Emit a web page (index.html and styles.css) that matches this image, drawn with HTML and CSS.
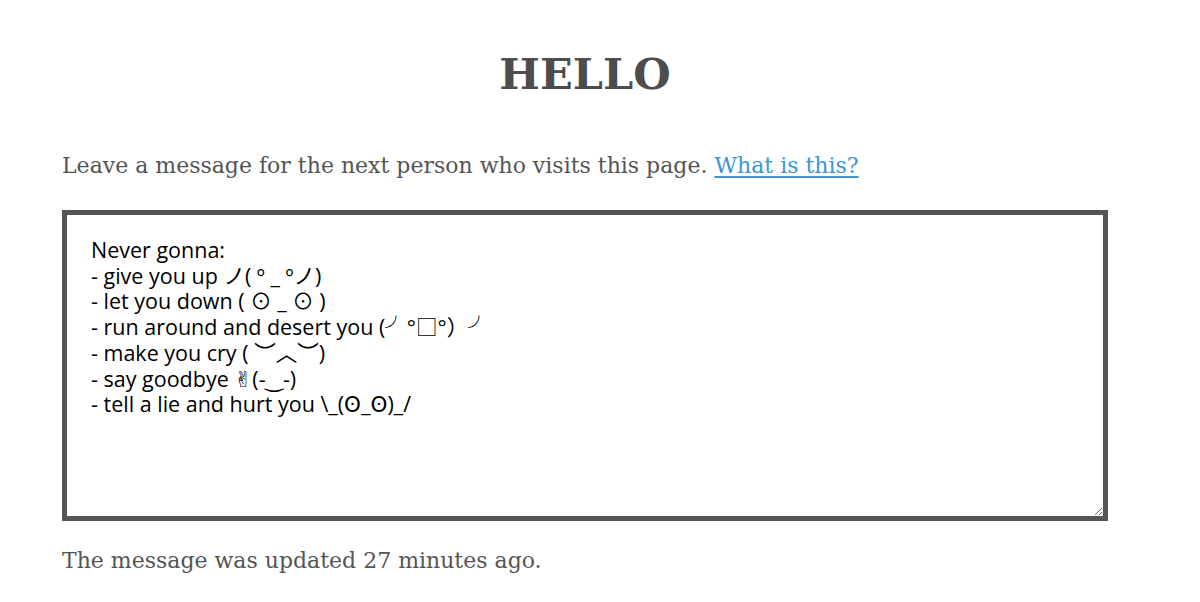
FILE: index.html
```html
<!DOCTYPE html>
<html>
<head>
<meta charset="utf-8">
<link rel="stylesheet" href="styles.css">
</head>
<body>
<main class="page">
  <h1 class="title">HELLO</h1>
  <p class="intro">Leave a message for the next person who visits this page. <a class="link" href="#">What is this?</a></p>
  <textarea class="message">Never gonna:
- give you up ノ( º _ ºノ)
- let you down ( ⊙ _ ⊙ )
- run around and desert you (╯°□°）╯
- make you cry ( ︶︿︶)
- say goodbye ✌︎(-‿-)
- tell a lie and hurt you \_(ʘ_ʘ)_/</textarea>
  <p class="status">The message was updated 27 minutes ago.</p>
</main>
</body>
</html>
```
FILE: styles.css
```css
html, body {
  margin: 0;
  padding: 0;
  background: #fff;
}
.page {
  width: 1046px;
  margin: 0 0 0 62px;
  padding-top: 44px;
  font-family: "DejaVu Serif", "Liberation Serif", serif;
  color: #555;
}
.title {
  margin: 0;
  text-align: center;
  font-size: 43px;
  font-weight: bold;
  line-height: 60px;
  color: #4d4d4d;
}
.intro {
  margin: 44px 0 0;
  font-size: 22px;
  line-height: 36px;
}
.link {
  color: #3b97d3;
  text-decoration: underline;
  text-underline-offset: 3px;
}
.message {
  display: block;
  box-sizing: border-box;
  width: 1046px;
  height: 311px;
  margin-top: 26px;
  padding: 22px 24px;
  border: 5px solid #555;
  border-radius: 0;
  font-family: "Open Sans", "Noto Sans CJK JP", "DejaVu Sans", sans-serif;
  font-size: 21.5px;
  line-height: 25.7px;
  color: #000;
  resize: vertical;
  outline: none;
}
.status {
  margin: 22px 0 0;
  font-size: 22px;
  line-height: 36px;
}
```
